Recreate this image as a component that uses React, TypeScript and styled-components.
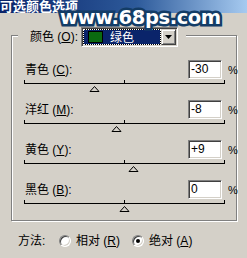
import React from 'react';
import styled, { createGlobalStyle } from 'styled-components';

const Global = createGlobalStyle`
  html, body { margin: 0; padding: 0; background: #d4d0c8; }
  body { font-family: "Liberation Sans", "Noto Sans CJK SC", sans-serif; }
`;

const Dialog = styled.div`
  position: relative;
  width: 247px;
  height: 258px;
  overflow: hidden;
  background: #d4d0c8;
  display: flex;
  flex-direction: column;
  font-family: "Liberation Sans", "Noto Sans CJK SC", sans-serif;
  font-size: 12px;
  color: #000;
`;

const TitleBar = styled.div`
  flex: none;
  height: 13px;
  background: linear-gradient(to right, #0a246a 0%, #2d5a9a 55%, #a6caf0 100%);
  color: #fff;
  font-family: "Noto Sans CJK SC", sans-serif;
  font-weight: bold;
  font-size: 13px;
  line-height: 11px;
  white-space: nowrap;
  overflow: hidden;
`;

const Watermark = styled.div`
  position: absolute;
  left: 60px;
  top: 8px;
  font-family: "DejaVu Sans", Verdana, sans-serif;
  font-weight: bold;
  font-size: 19.5px;
  line-height: 20px;
  letter-spacing: -0.4px;
  color: #fff;
  -webkit-text-stroke: 5px #133c66;
  paint-order: stroke fill;
  white-space: nowrap;
  pointer-events: none;
`;

const GroupBox = styled.div`
  flex: none;
  margin: 22px 0 0 11px;
  width: 226px;
  height: 186px;
  box-sizing: border-box;
  border: 1px solid #808080;
  box-shadow: 1px 1px 0 #fff, inset 1px 1px 0 #fff;
  padding-left: 12px;
  display: flex;
  flex-direction: column;
`;

const Legend = styled.div`
  align-self: flex-start;
  margin: -9px 0 0 -6px;
  padding: 0 8px 0 12px;
  height: 20px;
  background: #d4d0c8;
  display: flex;
  align-items: center;
  gap: 3px;
`;

const LabelText = styled.span`
  white-space: nowrap;
  line-height: 14px;
`;

const Combo = styled.div`
  width: 97px;
  height: 20px;
  box-sizing: border-box;
  border: 1px solid;
  border-color: #808080 #fff #fff #808080;
  box-shadow: inset 1px 1px 0 #404040, inset -1px -1px 0 #d4d0c8;
  padding: 1px;
  display: flex;
`;

const Selection = styled.div`
  width: 78px;
  height: 16px;
  box-sizing: border-box;
  border: 1px dotted #fff;
  background: linear-gradient(#0a246a, #0a246a) padding-box, #000;
  display: flex;
  align-items: center;
  color: #fff;
`;

const Swatch = styled.div<{ $color: string }>`
  width: 15px;
  height: 12px;
  box-sizing: border-box;
  margin-left: 4px;
  border: 1px solid #000;
  background: ${(p) => p.$color};
`;

const SelText = styled.span`
  margin-left: 7px;
  font-family: "Noto Sans CJK SC", sans-serif;
  font-size: 12px;
  line-height: 14px;
`;

const DropButton = styled.div`
  width: 15px;
  height: 16px;
  box-sizing: border-box;
  background: #d4d0c8;
  border: 1px solid;
  border-color: #d4d0c8 #404040 #404040 #d4d0c8;
  box-shadow: inset 1px 1px 0 #fff, inset -1px -1px 0 #808080;
  display: flex;
  align-items: center;
  justify-content: center;
`;

const Rows = styled.div`
  margin-top: 13px;
  display: flex;
  flex-direction: column;
`;

const Row = styled.div`
  height: 40px;
  display: flex;
  flex-direction: column;
`;

const InputLine = styled.div`
  height: 19px;
  display: flex;
  align-items: center;
`;

const RowLabel = styled.span`
  flex: 1;
  margin-left: 1px;
  white-space: nowrap;
  line-height: 14px;
`;

const NumberBox = styled.div`
  width: 34px;
  height: 19px;
  box-sizing: border-box;
  border: 1px solid;
  border-color: #808080 #fff #fff #808080;
  box-shadow: inset 1px 1px 0 #404040, inset -1px -1px 0 #d4d0c8;
  background: #fff;
  padding-left: 2px;
  font-size: 12px;
  line-height: 17px;
`;

const Percent = styled.span`
  width: 8px;
  margin-left: 6px;
  font-size: 11px;
  line-height: 12px;
`;

const Scale = styled.svg`
  display: block;
  margin-left: 0;
`;

const MethodRow = styled.div`
  flex: 1;
  display: flex;
  align-items: center;
  padding: 3px 0 0 18px;
`;

const MethodLabel = styled.span`
  width: 41px;
  white-space: nowrap;
  line-height: 14px;
`;

const RadioOption = styled.div`
  display: flex;
  align-items: center;
  gap: 5px;
  margin-right: 12px;
`;

const RadioCircle = styled.span<{ $checked: boolean }>`
  position: relative;
  width: 12px;
  height: 12px;
  box-sizing: border-box;
  border-radius: 50%;
  border: 1px solid;
  border-color: #808080 #fff #fff #808080;
  box-shadow: inset 1px 1px 0 #404040, inset -1px -1px 0 #d4d0c8;
  background: #fff;
  &::after {
    content: '';
    display: ${(p) => (p.$checked ? 'block' : 'none')};
    position: absolute;
    left: 3px;
    top: 3px;
    width: 4px;
    height: 4px;
    border-radius: 50%;
    background: #000;
  }
`;

type Channel = { name: string; key: string; value: string; num: number };

const channels: Channel[] = [
  { name: '青色', key: 'C', value: '-30', num: -30 },
  { name: '洋红', key: 'M', value: '-8', num: -8 },
  { name: '黄色', key: 'Y', value: '+9', num: 9 },
  { name: '黑色', key: 'B', value: '0', num: 0 },
];

function SliderScale({ value }: { value: number }) {
  const c = 100 + value + 0.5;
  return (
    <Scale width="201" height="21" viewBox="0 0 201 21">
      <line x1="0" y1="4.5" x2="201" y2="4.5" stroke="#000" strokeWidth="1" />
      <line x1="0.5" y1="1" x2="0.5" y2="5" stroke="#000" strokeWidth="1" />
      <line x1="100.5" y1="1" x2="100.5" y2="5" stroke="#000" strokeWidth="1" />
      <line x1="200.5" y1="1" x2="200.5" y2="5" stroke="#000" strokeWidth="1" />
      <polygon
        points={`${c},7.5 ${c - 4.5},12.5 ${c + 4.5},12.5`}
        fill="#d4d0c8"
        stroke="#000"
        strokeWidth="1"
      />
    </Scale>
  );
}

export default function App() {
  return (
    <>
      <Global />
      <Dialog>
        <TitleBar>可选颜色选项</TitleBar>
        <GroupBox>
          <Legend>
            <LabelText>
              颜色 (<u>O</u>):
            </LabelText>
            <Combo>
              <Selection>
                <Swatch $color="#0b6a10" />
                <SelText>绿色</SelText>
              </Selection>
              <DropButton>
                <svg width="7" height="4" viewBox="0 0 7 4">
                  <polygon points="0,0 7,0 3.5,4" fill="#000" />
                </svg>
              </DropButton>
            </Combo>
          </Legend>
          <Rows>
            {channels.map((ch) => (
              <Row key={ch.key}>
                <InputLine>
                  <RowLabel>
                    {ch.name} (<u>{ch.key}</u>):
                  </RowLabel>
                  <NumberBox>{ch.value}</NumberBox>
                  <Percent>%</Percent>
                </InputLine>
                <SliderScale value={ch.num} />
              </Row>
            ))}
          </Rows>
        </GroupBox>
        <MethodRow>
          <MethodLabel>方法:</MethodLabel>
          <RadioOption>
            <RadioCircle $checked={false} />
            <LabelText>
              相对 (<u>R</u>)
            </LabelText>
          </RadioOption>
          <RadioOption>
            <RadioCircle $checked={true} />
            <LabelText>
              绝对 (<u>A</u>)
            </LabelText>
          </RadioOption>
        </MethodRow>
        <Watermark>www.68ps.com</Watermark>
      </Dialog>
    </>
  );
}
